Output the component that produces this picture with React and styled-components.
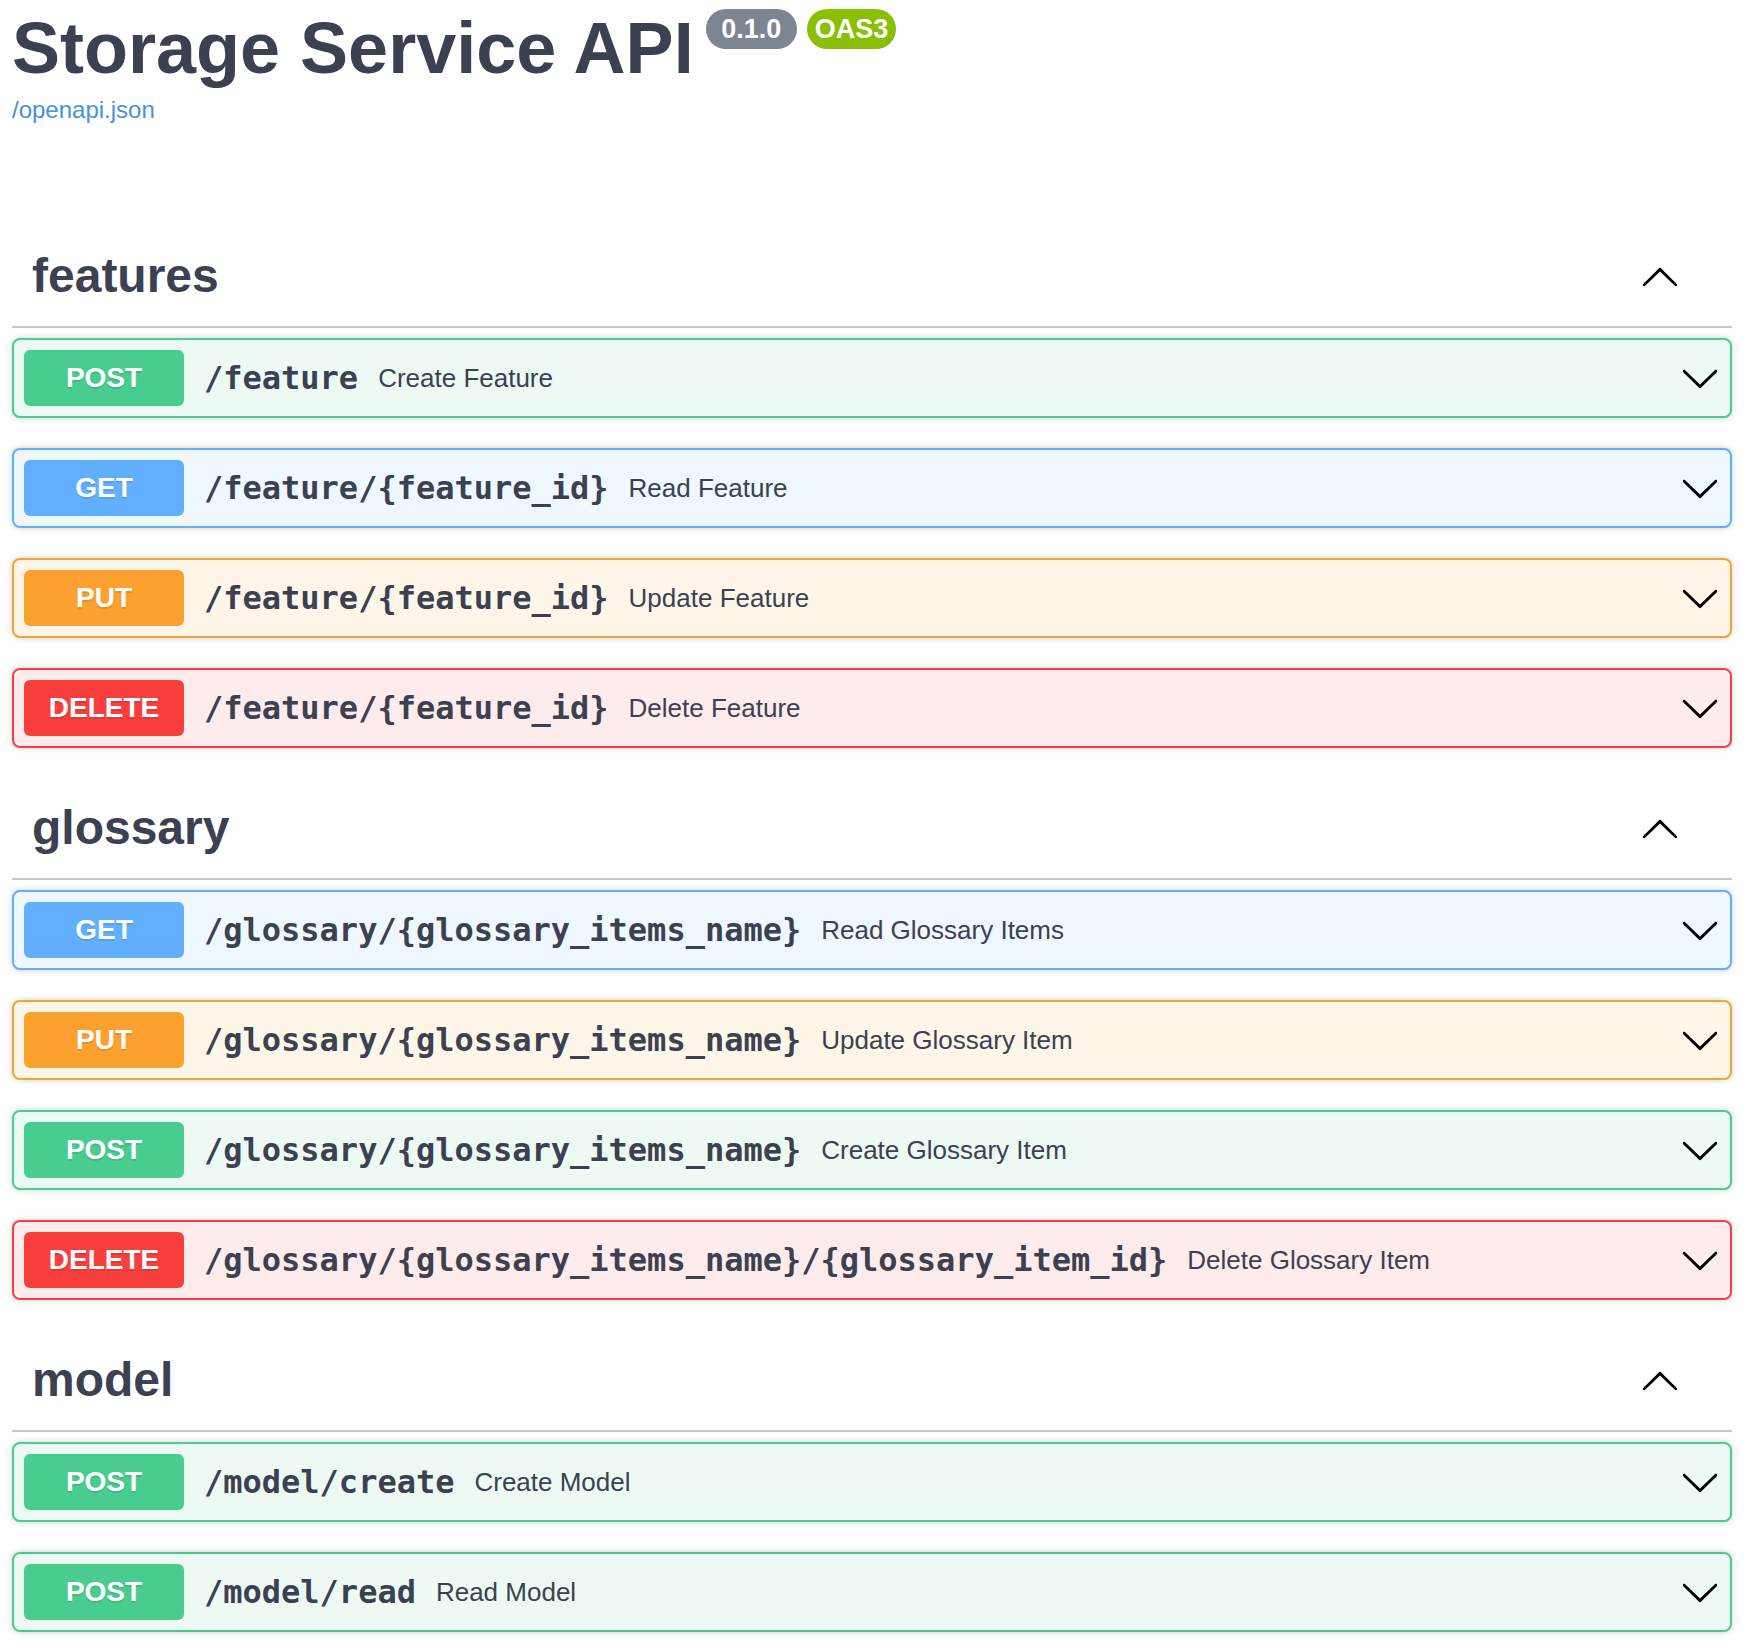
import React from "react";
import styled, { createGlobalStyle, css } from "styled-components";

const GlobalStyle = createGlobalStyle`
  html, body {
    margin: 0;
    padding: 0;
    background: #fff;
    overflow: hidden;
  }
  body {
    font-family: "Liberation Sans", Arial, sans-serif;
    color: #3b4151;
  }
`;

// method colours: badge / border, and a 10% tint for the block
const methods = {
  post: { main: "#49cc90", tint: "#edfaf4" },
  get: { main: "#61affe", tint: "#eff7ff" },
  put: { main: "#fca130", tint: "#fff6ea" },
  delete: { main: "#f93e3e", tint: "#feecec" },
};

const sections = [
  {
    name: "features",
    ops: [
      ["post", "/feature", "Create Feature"],
      ["get", "/feature/{feature_id}", "Read Feature"],
      ["put", "/feature/{feature_id}", "Update Feature"],
      ["delete", "/feature/{feature_id}", "Delete Feature"],
    ],
  },
  {
    name: "glossary",
    ops: [
      ["get", "/glossary/{glossary_items_name}", "Read Glossary Items"],
      ["put", "/glossary/{glossary_items_name}", "Update Glossary Item"],
      ["post", "/glossary/{glossary_items_name}", "Create Glossary Item"],
      [
        "delete",
        "/glossary/{glossary_items_name}/{glossary_item_id}",
        "Delete Glossary Item",
      ],
    ],
  },
  {
    name: "model",
    ops: [
      ["post", "/model/create", "Create Model"],
      ["post", "/model/read", "Read Model"],
    ],
  },
];

const Wrapper = styled.div`
  padding: 0 21px 0 12px;
`;

const Info = styled.div`
  padding-top: 7px;
  margin-bottom: 102px;
`;

const TitleRow = styled.div`
  display: flex;
  align-items: flex-start;
`;

const Title = styled.h2`
  margin: 0;
  font-size: 72px;
  font-weight: 700;
  line-height: normal;
  color: #3b4151;
`;

const Badge = styled.small`
  display: inline-block;
  margin: 2px 0 0 ${(p) => (p.$first ? "12px" : "10px")};
  padding: 4px 8px;
  border-radius: 57px;
  background: ${(p) => p.$bg};
  font-size: 27px;
  font-weight: 700;
  line-height: 32px;
  color: #fff;
  white-space: pre;
`;

const SpecLink = styled.a`
  display: block;
  margin-top: 7px;
  font-size: 24px;
  color: #4990e2;
  text-decoration: none;
`;

const Tag = styled.div`
  display: flex;
  align-items: center;
  padding: 20px 40px 20px 20px;
  margin-bottom: 10px;
  border-bottom: 2px solid #c4c6cb;
`;

const TagTitle = styled.h3`
  flex: 1;
  margin: 0;
  font-size: 48px;
  font-weight: 700;
  line-height: 60px;
  color: #3b4151;
`;

const ExpandButton = styled.button`
  display: flex;
  align-items: center;
  padding: 0;
  margin-right: 12px;
  border: none;
  background: none;
`;

const Opblock = styled.div`
  margin-bottom: 30px;
  border-radius: 8px;
  box-shadow: 0 0 6px rgba(0, 0, 0, 0.19);
  ${({ $method }) => css`
    border: 2px solid ${methods[$method].main};
    background: ${methods[$method].tint};
  `}
`;

const Summary = styled.div`
  display: flex;
  align-items: center;
  padding: 10px;
`;

const Method = styled.span`
  min-width: 160px;
  padding: 12px 0;
  border-radius: 6px;
  background: ${(p) => methods[p.$method].main};
  font-size: 28px;
  font-weight: 700;
  line-height: 32px;
  text-align: center;
  color: #fff;
  text-shadow: 0 2px 0 rgba(0, 0, 0, 0.1);
`;

const Path = styled.span`
  padding: 0 20px;
  font-family: "DejaVu Sans Mono", "Liberation Mono", monospace;
  font-size: 32px;
  font-weight: 700;
  color: #3b4151;
`;

const Description = styled.span`
  flex: 1;
  font-size: 26px;
  color: #3b4151;
`;

const ArrowDown = () => (
  <svg width="40" height="40" viewBox="0 0 20 20">
    <path
      fill="#000"
      d="M17.418 6.109c.272-.268.709-.268.979 0s.271.701 0 .969l-7.908 7.83c-.27.268-.707.268-.979 0l-7.908-7.83c-.27-.268-.27-.701 0-.969.271-.268.709-.268.979 0L10 13.25l7.418-7.141z"
    />
  </svg>
);

const ArrowUp = () => (
  <svg width="40" height="40" viewBox="0 0 20 20">
    <path
      fill="#000"
      d="M17.418 14.908c.272.268.709.268.979 0s.271-.701 0-.969l-7.908-7.83c-.27-.268-.707-.268-.979 0l-7.908 7.83c-.27.268-.27.701 0 .969.271.268.709.268.979 0L10 7.767l7.418 7.141z"
    />
  </svg>
);

function Operation({ method, path, summary }) {
  return (
    <Opblock $method={method}>
      <Summary>
        <Method $method={method}>{method.toUpperCase()}</Method>
        <Path>{path}</Path>
        <Description>{summary}</Description>
        <ArrowDown />
      </Summary>
    </Opblock>
  );
}

export default function App() {
  return (
    <Wrapper>
      <GlobalStyle />
      <Info>
        <TitleRow>
          <Title>Storage Service API</Title>
          <Badge $first $bg="#7d8492">{" 0.1.0 "}</Badge>
          <Badge $bg="#89bf04">OAS3</Badge>
        </TitleRow>
        <SpecLink href="#">/openapi.json</SpecLink>
      </Info>
      {sections.map((section) => (
        <section key={section.name}>
          <Tag>
            <TagTitle>{section.name}</TagTitle>
            <ExpandButton>
              <ArrowUp />
            </ExpandButton>
          </Tag>
          {section.ops.map(([method, path, summary]) => (
            <Operation
              key={method + path}
              method={method}
              path={path}
              summary={summary}
            />
          ))}
        </section>
      ))}
    </Wrapper>
  );
}
